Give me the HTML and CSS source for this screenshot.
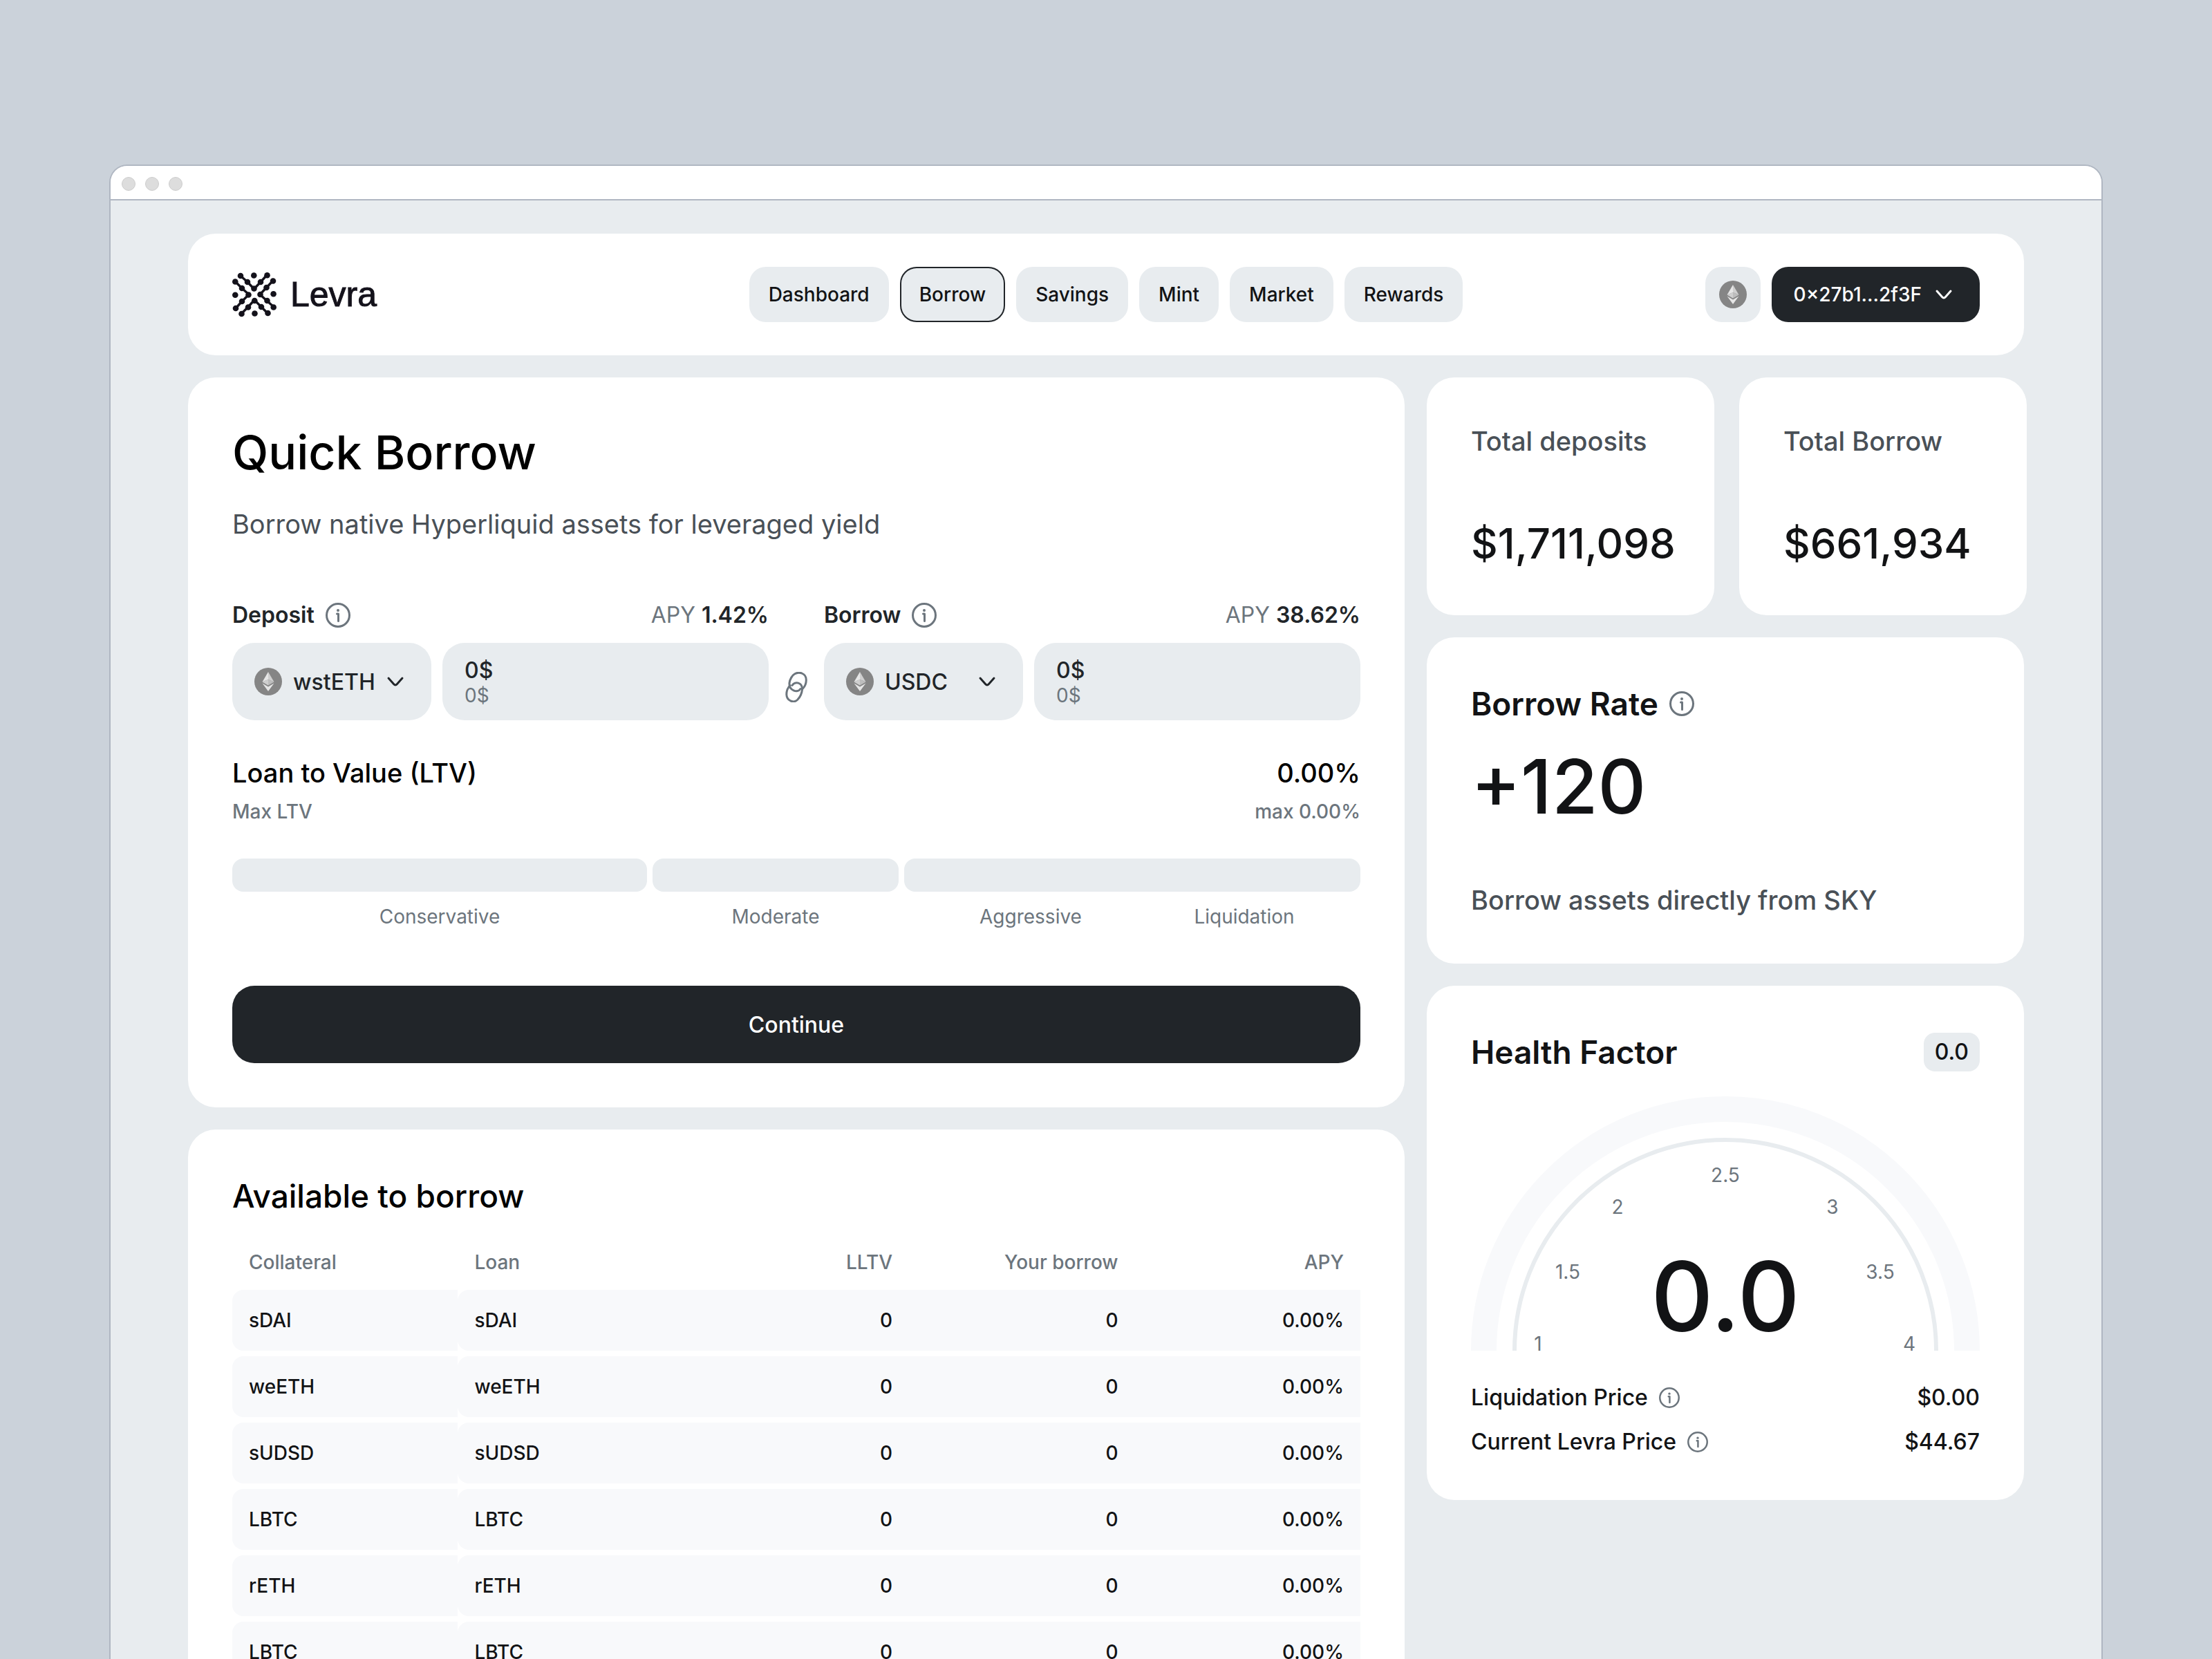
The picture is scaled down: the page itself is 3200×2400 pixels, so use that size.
FILE: index.html
```html
<!DOCTYPE html>
<html lang="en">
<head>
    <meta charset="UTF-8">
    <meta name="viewport" content="width=device-width, initial-scale=1.0">
    <title>Levra - Quick Borrow</title>
    <link rel="stylesheet" href="styles.css">
</head>
<body>
    <!-- shared icons -->
    <svg class="sprite" aria-hidden="true">
        <symbol id="eth" viewBox="0 0 40 40">
            <circle cx="20" cy="20" r="20" fill="#858585"/>
            <path d="M20 6 11.5 20.5 20 17z" fill="#e6e6e6"/>
            <path d="M20 6 28.5 20.5 20 17z" fill="#cfcfcf"/>
            <path d="M20 17 11.5 20.5 20 25.5z" fill="#cfcfcf"/>
            <path d="M20 17 28.5 20.5 20 25.5z" fill="#bdbdbd"/>
            <path d="M11.5 22.5 20 27.5 28.5 22.5 20 34z" fill="#e6e6e6"/>
        </symbol>
        <symbol id="info" viewBox="0 0 36 36">
            <circle cx="18" cy="18" r="16.5" fill="none" stroke="currentColor" stroke-width="3"/>
            <circle cx="18" cy="11" r="2" fill="currentColor"/>
            <path d="M16.5 16H18.5V26.5" fill="none" stroke="currentColor" stroke-width="3" stroke-linecap="round" stroke-linejoin="round"/>
        </symbol>
        <symbol id="chevron" viewBox="0 0 40 40">
            <path d="M10 15 17.5 23.5Q20 26.3 22.5 23.5L30 15" fill="none" stroke="currentColor" stroke-width="3" stroke-linecap="round"/>
        </symbol>
    </svg>

    <div class="window">
        <div class="titlebar">
            <span class="dot"></span>
            <span class="dot"></span>
            <span class="dot"></span>
        </div>

        <div class="page">
            <header class="card header">
                <a class="logo" href="#">
                    <svg class="logo-mark" viewBox="0 0 64 64" aria-hidden="true">
                        <g fill="none" stroke="#14121b" stroke-width="3.4" stroke-linecap="round" stroke-linejoin="round">
                            <path d="M12 5 22 14 31.5 24 41 14 50 4"/>
                            <path d="M4 13 14 23 24 32 14 42 5 52"/>
                            <path d="M59 12 49.5 22 40 32 50 41 60 50"/>
                            <path d="M13 60 23 50 32 40 42 50 51 59"/>
                        </g>
                        <g fill="#14121b">
                            <circle cx="12" cy="5" r="4.3"/><circle cx="22" cy="14" r="4.3"/><circle cx="31.5" cy="23.5" r="4.3"/><circle cx="41" cy="14" r="4.3"/><circle cx="50.5" cy="4.3" r="4.3"/>
                            <circle cx="4.3" cy="13.5" r="4.3"/><circle cx="14" cy="23" r="4.3"/><circle cx="23.5" cy="32.5" r="4.3"/><circle cx="14" cy="42" r="4.3"/><circle cx="5" cy="52" r="4.3"/>
                            <circle cx="59" cy="12.5" r="4.3"/><circle cx="49.5" cy="22" r="4.3"/><circle cx="40.5" cy="32" r="4.3"/><circle cx="50.5" cy="41" r="4.3"/><circle cx="59.7" cy="50.5" r="4.3"/>
                            <circle cx="13.5" cy="60" r="4.3"/><circle cx="23" cy="50.5" r="4.3"/><circle cx="32.3" cy="41" r="4.3"/><circle cx="42" cy="50" r="4.3"/><circle cx="51.5" cy="59" r="4.3"/>
                            <circle cx="31.3" cy="4.5" r="4.3"/><circle cx="4.3" cy="32.7" r="4.3"/><circle cx="59.6" cy="31.3" r="4.3"/><circle cx="32.5" cy="59.5" r="4.3"/>
                        </g>
                    </svg>
                    <span class="logo-name">Levra</span>
                </a>
                <nav class="nav">
                    <a class="nav-link" href="#">Dashboard</a>
                    <a class="nav-link active" href="#">Borrow</a>
                    <a class="nav-link" href="#">Savings</a>
                    <a class="nav-link" href="#">Mint</a>
                    <a class="nav-link" href="#">Market</a>
                    <a class="nav-link" href="#">Rewards</a>
                </nav>
                <div class="account">
                    <button class="network" type="button" aria-label="Network"><svg class="coin"><use href="#eth"/></svg></button>
                    <button class="wallet" type="button">0×27b1...2f3F <svg class="chevron"><use href="#chevron"/></svg></button>
                </div>
            </header>

            <div class="columns">
                <main class="column">
                    <section class="card">
                        <h1 class="page-title">Quick Borrow</h1>
                        <p class="lead">Borrow native Hyperliquid assets for leveraged yield</p>

                        <div class="pair">
                            <div class="side">
                                <div class="side-head">
                                    <label class="side-label" for="depositAmount">Deposit</label>
                                    <svg class="info"><use href="#info"/></svg>
                                    <span class="apy">APY <b>1.42%</b></span>
                                </div>
                                <div class="fields">
                                    <div class="token">
                                        <svg class="coin"><use href="#eth"/></svg>
                                        <select class="token-select" aria-label="Deposit token">
                                            <option>wstETH</option>
                                            <option>USDC</option>
                                        </select>
                                        <svg class="chevron"><use href="#chevron"/></svg>
                                    </div>
                                    <div class="amount">
                                        <input class="amount-input" id="depositAmount" type="text" value="0$">
                                        <span class="amount-usd">0$</span>
                                    </div>
                                </div>
                            </div>
                            <svg class="link" viewBox="0 0 32 44" aria-hidden="true">
                                <g fill="none" stroke="#6c757d" stroke-width="3" stroke-linecap="round">
                                    <path d="M10 19.5C14 13 25 15 24.5 25.5C24 31 21 37 17.5 40.5C12 45.5 2 42 1.800 32.5C1.800 27 4.5 22 7 19.5"/>
                                    <path d="M22 24.5C18 31 5 27 6 16C6.5 11 10 5 13.5 3C20 -1 30.5 2 30.3 12C30.2 17 28.5 21 25.5 24"/>
                                </g>
                            </svg>
                            <div class="side">
                                <div class="side-head">
                                    <label class="side-label" for="borrowAmount">Borrow</label>
                                    <svg class="info"><use href="#info"/></svg>
                                    <span class="apy">APY <b>38.62%</b></span>
                                </div>
                                <div class="fields">
                                    <div class="token">
                                        <svg class="coin"><use href="#eth"/></svg>
                                        <select class="token-select" aria-label="Borrow token">
                                            <option>USDC</option>
                                            <option>wstETH</option>
                                        </select>
                                        <svg class="chevron"><use href="#chevron"/></svg>
                                    </div>
                                    <div class="amount">
                                        <input class="amount-input" id="borrowAmount" type="text" value="0$">
                                        <span class="amount-usd">0$</span>
                                    </div>
                                </div>
                            </div>
                        </div>

                        <div class="row ltv">
                            <span>Loan to Value (LTV)</span>
                            <span>0.00%</span>
                        </div>
                        <div class="row ltv-max">
                            <span>Max LTV</span>
                            <span>max 0.00%</span>
                        </div>
                        <div class="risk-bar">
                            <span class="risk-part"></span>
                            <span class="risk-part"></span>
                            <span class="risk-part"></span>
                        </div>
                        <div class="risk-labels">
                            <span>Conservative</span>
                            <span>Moderate</span>
                            <span>Aggressive</span>
                            <span>Liquidation</span>
                        </div>

                        <button class="continue" type="button">Continue</button>
                    </section>

                    <section class="card">
                        <h2 class="table-title">Available to borrow</h2>
                        <table class="assets">
                            <thead>
                                <tr><th>Collateral</th><th>Loan</th><th class="num">LLTV</th><th class="num">Your borrow</th><th class="num">APY</th></tr>
                            </thead>
                            <tbody>
                                <tr><td>sDAI</td><td>sDAI</td><td class="num">0</td><td class="num">0</td><td class="num">0.00%</td></tr>
                                <tr><td>weETH</td><td>weETH</td><td class="num">0</td><td class="num">0</td><td class="num">0.00%</td></tr>
                                <tr><td>sUDSD</td><td>sUDSD</td><td class="num">0</td><td class="num">0</td><td class="num">0.00%</td></tr>
                                <tr><td>LBTC</td><td>LBTC</td><td class="num">0</td><td class="num">0</td><td class="num">0.00%</td></tr>
                                <tr><td>rETH</td><td>rETH</td><td class="num">0</td><td class="num">0</td><td class="num">0.00%</td></tr>
                                <tr><td>LBTC</td><td>LBTC</td><td class="num">0</td><td class="num">0</td><td class="num">0.00%</td></tr>
                            </tbody>
                        </table>
                    </section>
                </main>

                <aside class="column">
                    <div class="stats">
                        <section class="card stat">
                            <h2 class="stat-label">Total deposits</h2>
                            <p class="stat-value">$1,711,098</p>
                        </section>
                        <section class="card stat">
                            <h2 class="stat-label">Total Borrow</h2>
                            <p class="stat-value">$661,934</p>
                        </section>
                    </div>

                    <section class="card">
                        <div class="card-head">
                            <h2 class="card-title">Borrow Rate</h2>
                            <svg class="info"><use href="#info"/></svg>
                        </div>
                        <p class="rate">+120</p>
                        <p class="note">Borrow assets directly from SKY</p>
                    </section>

                    <section class="card">
                        <div class="card-head">
                            <h2 class="card-title">Health Factor</h2>
                            <span class="badge">0.0</span>
                        </div>
                        <svg class="gauge" viewBox="0 0 736 368" role="img" aria-label="Health factor 0.0">
                            <circle cx="368" cy="368" r="349.5" fill="none" stroke="#f8f9fb" stroke-width="37"/>
                            <circle cx="368" cy="368" r="305" fill="none" stroke="#e8ecef" stroke-width="6"/>
                            <g class="gauge-ticks">
                                <text x="97" y="368">1</text>
                                <text x="140" y="264">1.5</text>
                                <text x="212" y="170">2</text>
                                <text x="368" y="124">2.5</text>
                                <text x="523" y="170">3</text>
                                <text x="592" y="264">3.5</text>
                                <text x="634" y="368">4</text>
                            </g>
                            <text class="gauge-value" x="368" y="340">0.0</text>
                        </svg>
                        <dl class="prices">
                            <div class="row">
                                <dt>Liquidation Price <svg class="info small"><use href="#info"/></svg></dt>
                                <dd>$0.00</dd>
                            </div>
                            <div class="row">
                                <dt>Current Levra Price <svg class="info small"><use href="#info"/></svg></dt>
                                <dd>$44.67</dd>
                            </div>
                        </dl>
                    </section>
                </aside>
            </div>
        </div>
    </div>
</body>
</html>
```
FILE: styles.css
```css
* {
    box-sizing: border-box;
    margin: 0;
    padding: 0;
}
html {
    height: 100%;
}
body {
    height: 100%;
    overflow: hidden;
    padding: 238px 158px 0;
    background: #cbd2da;
    color: #121315;
    font-family: Inter, "Liberation Sans", sans-serif;
    font-size: 28px;
    font-weight: 500;
}
a {
    color: inherit;
    text-decoration: none;
}
button, input, select {
    border: 0;
    background: none;
    color: inherit;
    font: inherit;
}
.sprite {
    display: none;
}

/* browser window */
.window {
    border: 2px solid #b0b7c2;
    border-radius: 26px 26px 0 0;
    background: #e8ecef;
    overflow: hidden;
}
.titlebar {
    display: flex;
    align-items: center;
    gap: 14px;
    height: 50px;
    padding: 4px 16px 0;
    background: #fff;
    border-bottom: 2px solid #b0b7c2;
}
.dot {
    width: 20px;
    height: 20px;
    border: 1px solid #cccccc;
    border-radius: 50%;
    background: #dddddd;
}
.page {
    padding: 48px 112px;
}
.card {
    padding: 64px;
    border-radius: 40px;
    background: #fff;
}

/* header */
.header {
    display: grid;
    grid-template-columns: 1fr auto 1fr;
    align-items: center;
    padding: 48px 64px;
    margin-bottom: 32px;
}
.logo {
    display: flex;
    align-items: center;
    gap: 20px;
    color: #14121b;
}
.logo-mark {
    width: 64px;
    height: 64px;
    overflow: visible;
}
.logo-name {
    font-family: "Liberation Sans", Arial, sans-serif;
    font-size: 50px;
    line-height: 64px;
    -webkit-text-stroke: 1px #14121b;
}
.nav {
    display: flex;
    gap: 16px;
}
.nav-link {
    padding: 0 28px;
    border-radius: 24px;
    background: #e8ecef;
    line-height: 80px;
}
.nav-link.active {
    box-shadow: inset 0 0 0 2px #212529;
}
.account {
    display: flex;
    justify-content: flex-end;
    gap: 16px;
}
.coin {
    flex: none;
    width: 40px;
    height: 40px;
}
.chevron {
    flex: none;
    width: 40px;
    height: 40px;
    pointer-events: none;
}
.network, .wallet {
    display: flex;
    align-items: center;
    justify-content: center;
    height: 80px;
    border-radius: 24px;
}
.network {
    width: 80px;
    background: #e8ecef;
}
.wallet {
    gap: 12px;
    padding: 0 32px;
    background: #212529;
    color: #fff;
}

/* layout */
.columns {
    display: grid;
    grid-template-columns: 1760fr 864fr;
    align-items: start;
    gap: 32px;
}
.column {
    display: grid;
    gap: 32px;
    min-width: 0;
}
.row {
    display: flex;
    justify-content: space-between;
}
.info {
    flex: none;
    width: 36px;
    height: 36px;
    color: #6c757d;
}
.info.small {
    width: 30px;
    height: 30px;
}

/* quick borrow */
.page-title {
    color: #000;
    font-size: 68px;
    font-weight: 500;
    line-height: 88px;
}
.lead {
    margin-top: 32px;
    color: #495057;
    font-size: 38px;
    font-weight: 400;
    line-height: 56px;
}
.pair {
    display: grid;
    grid-template-columns: 1fr 80px 1fr;
    margin-top: 84px;
}
.side-head {
    display: flex;
    align-items: center;
    gap: 16px;
    margin-bottom: 20px;
    font-size: 32px;
    line-height: 40px;
    color: #212529;
}
.side-label {
    font-weight: 600;
}
.apy {
    margin-left: auto;
    color: #6c757d;
    font-weight: 400;
}
.apy b {
    color: #212529;
    font-weight: 600;
}
.fields {
    display: grid;
    grid-template-columns: 288fr 472fr;
    gap: 16px;
}
.token, .amount {
    height: 112px;
    padding: 0 32px;
    border-radius: 32px;
    background: #e8ecef;
    color: #212529;
    font-size: 32px;
}
.token {
    display: flex;
    align-items: center;
}
.token-select {
    flex: 1;
    min-width: 0;
    margin-left: 16px;
    appearance: none;
}
.amount {
    display: flex;
    flex-direction: column;
    justify-content: center;
}
.amount-input {
    width: 100%;
    line-height: 40px;
    height: 40px;
}
.amount-usd {
    color: #6c757d;
    font-size: 28px;
    font-weight: 400;
    line-height: 32px;
}
.link {
    align-self: end;
    justify-self: center;
    width: 32px;
    height: 44px;
    margin-bottom: 26px;
}
.ltv {
    margin-top: 48px;
    color: #000;
    font-size: 38px;
    line-height: 56px;
}
.ltv-max {
    margin-top: 8px;
    color: #6c757d;
    line-height: 40px;
}
.risk-bar {
    display: grid;
    grid-template-columns: 600fr 356fr 660fr;
    gap: 8px;
    margin-top: 48px;
}
.risk-part {
    height: 48px;
    border-radius: 16px;
    background: #e8ecef;
}
.risk-labels {
    display: grid;
    grid-template-columns: 600fr 356fr 366fr 236fr 42fr;
    gap: 8px;
    margin-top: 16px;
    color: #6c757d;
    font-weight: 400;
    line-height: 40px;
    text-align: center;
}
.continue {
    display: block;
    width: 100%;
    height: 112px;
    margin-top: 80px;
    border-radius: 32px;
    background: #212529;
    color: #fff;
    font-size: 32px;
    font-weight: 500;
}

/* available to borrow */
.table-title {
    color: #000;
    font-size: 46px;
    font-weight: 500;
    line-height: 64px;
}
.assets {
    width: 100%;
    margin-top: 24px;
    border-spacing: 0 8px;
    table-layout: fixed;
}
.assets th {
    height: 64px;
    padding: 0 24px;
    color: #6c757d;
    font-weight: 500;
    text-align: left;
}
.assets td {
    height: 88px;
    padding: 0 24px;
    background: #f8f9fb;
}
.assets td:nth-child(-n+2) {
    border-radius: 16px 0 0 16px;
}
.assets .num {
    text-align: right;
}

/* side cards */
.stats {
    display: grid;
    grid-template-columns: repeat(2, minmax(0, 1fr));
    gap: 36px;
    margin-right: -4px;
}
.stat {
    white-space: nowrap;
}
.stat-label, .note {
    color: #495057;
    font-size: 38px;
    font-weight: 500;
    line-height: 56px;
}
.stat-value {
    margin-top: 80px;
    font-size: 60px;
    line-height: 80px;
}
.card-head {
    display: flex;
    align-items: center;
    gap: 16px;
}
.card-title {
    font-size: 46px;
    font-weight: 600;
    line-height: 64px;
}
.rate {
    margin-top: 16px;
    font-size: 108px;
    line-height: 144px;
}
.note {
    margin-top: 64px;
}
.badge {
    margin-left: auto;
    padding: 0 16px;
    border-radius: 16px;
    background: #e8ecef;
    font-size: 32px;
    line-height: 56px;
}
.gauge {
    display: block;
    width: 100%;
    margin-top: 32px;
}
.gauge-ticks {
    fill: #6c757d;
    font-weight: 400;
    text-anchor: middle;
}
.gauge-value {
    fill: #121315;
    font-size: 140px;
    text-anchor: middle;
}
.prices {
    display: grid;
    gap: 24px;
    margin-top: 48px;
    font-size: 32px;
    line-height: 40px;
}
.prices dt {
    display: flex;
    align-items: center;
    gap: 16px;
}
```
